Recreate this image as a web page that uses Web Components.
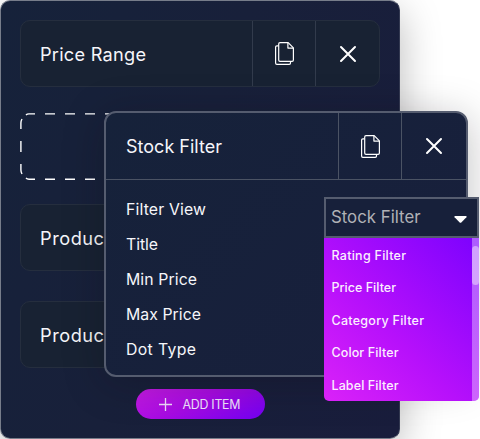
<!DOCTYPE html>
<html lang="en">
<head>
<meta charset="utf-8">
<title>Filter builder</title>
<style>
    html, body {
        margin: 0;
        width: 480px;
        height: 439px;
        overflow: hidden;
        background: #fff;
    }

    body {
        font-family: Inter, "Liberation Sans", sans-serif;
        color: #f6f6fa;
    }
</style>
</head>
<body>
<filter-builder>
    <filter-card><fit-text width="106">Price Range</fit-text></filter-card>
    <drop-zone></drop-zone>
    <filter-card><fit-text width="70.5">Product</fit-text></filter-card>
    <filter-card class="last"><fit-text width="70.5">Product</fit-text></filter-card>
    <add-button slot="footer"><fit-text width="58">ADD ITEM</fit-text></add-button>

    <filter-dialog slot="dialog">
        <fit-text slot="title" width="96">Stock Filter</fit-text>
        <fit-text width="80">Filter View</fit-text>
        <fit-text width="32">Title</fit-text>
        <fit-text width="71">Min Price</fit-text>
        <fit-text width="75">Max Price</fit-text>
        <fit-text width="70">Dot Type</fit-text>
    </filter-dialog>

    <filter-select slot="menu">
        <fit-text slot="value" width="89.5">Stock Filter</fit-text>
        <fit-text width="74.5">Rating Filter</fit-text>
        <fit-text width="64.5">Price Filter</fit-text>
        <fit-text width="92.5">Category Filter</fit-text>
        <fit-text width="67">Color Filter</fit-text>
        <fit-text width="67">Label Filter</fit-text>
    </filter-select>
</filter-builder>

<script>
function createTemplate(html) {
    const template = document.createElement('template');
    template.innerHTML = html;
    return template;
}

class BaseElement extends HTMLElement {
    constructor() {
        super();
        this._shadowRoot = this.attachShadow({ mode: 'open' });
        this._shadowRoot.appendChild(this.constructor.template.content.cloneNode(true));
    }
}

// Label that tracks its letters out to the given width
class FitText extends BaseElement {
    static template = createTemplate(`
        <style>
            :host { display: inline-block; white-space: nowrap; }
        </style>
        <slot></slot>
    `);

    connectedCallback() {
        const target = parseFloat(this.getAttribute('width'));
        const gaps = this.textContent.length - 1;
        const width = this.getBoundingClientRect().width;
        this.style.letterSpacing = (target - width) / gaps + 'px';
    }
}

class CopyIcon extends BaseElement {
    static template = createTemplate(`
        <style>
            :host { display: block; width: 19px; height: 23px; }
            svg { display: block; }
        </style>
        <svg width="19" height="23" viewBox="0 0 19 23" fill="none" stroke="#fff" stroke-width="1.2" stroke-linejoin="round">
            <path d="M3.5 3.8H1.9Q.6 3.8.6 5.1V21.1Q.6 22.4 1.9 22.4H14.2Q15.5 22.4 15.5 21.1V19.6"/>
            <path d="M5 .6H13.2L18.4 5.9V18.1Q18.4 19.4 17.1 19.4H5Q3.7 19.4 3.7 18.1V1.9Q3.7.6 5 .6Z"/>
            <path d="M12.9.8V6.1H18.2"/>
        </svg>
    `);
}

class CloseIcon extends BaseElement {
    static template = createTemplate(`
        <style>
            :host { display: block; width: 18px; height: 18px; }
            svg { display: block; }
        </style>
        <svg width="18" height="18" viewBox="0 0 18 18" fill="none" stroke="#fff" stroke-width="2" stroke-linecap="round">
            <path d="M2 2L16 16M16 2L2 16"/>
        </svg>
    `);
}

class FilterCard extends BaseElement {
    static template = createTemplate(`
        <style>
            :host {
                display: grid;
                grid-template-columns: 1fr 63px 64px;
                box-sizing: border-box;
                height: 67px;
                border: 1px solid #252e3e;
                border-radius: 10px;
                background: #182233;
                font-size: 18.2px;
                overflow: hidden;
            }
            :host(.last) { margin-top: 6px; }
            div { display: flex; align-items: center; }
            .title { padding-left: 19px; }
            .action { justify-content: center; border-left: 1px solid #323b4c; }
        </style>
        <div class="title"><slot></slot></div>
        <div class="action"><copy-icon></copy-icon></div>
        <div class="action"><close-icon></close-icon></div>
    `);
}

class DropZone extends BaseElement {
    static template = createTemplate(`
        <style>
            :host { display: block; height: 67px; margin: 2px 0 0; }
            svg { display: block; }
        </style>
        <svg width="360" height="67" fill="none" stroke="#fff" stroke-width="1.4">
            <path d="M6 2Q7 .9 9 .9H15M25 .9H350M6 65Q7 66.2 9 66.2H15M25 66.2H350" stroke-dasharray="10 10"/>
            <path d="M2 6Q.9 8 .9 10V16M.9 28V39M.9 51V57Q.9 59 2 61"/>
        </svg>
    `);
}

class AddButton extends BaseElement {
    static template = createTemplate(`
        <style>
            :host {
                display: flex;
                align-items: center;
                gap: 11px;
                box-sizing: border-box;
                width: 129px;
                height: 30px;
                padding-left: 23px;
                border-radius: 15px;
                background: linear-gradient(155deg, #c71be5 0%, #a80be3 45%, #7200f2 100%);
                color: #f0e2fd;
                font-size: 12.4px;
                font-weight: 400;
            }
        </style>
        <svg width="13" height="13" stroke="#efdcfa" stroke-width="1.3"><path d="M6.5 0V13M0 6.5H13"/></svg>
        <slot></slot>
    `);
}

class FilterDialog extends BaseElement {
    static template = createTemplate(`
        <style>
            :host {
                display: block;
                box-sizing: border-box;
                width: 364px;
                height: 266px;
                border: 2px solid #555c6f;
                border-radius: 12px;
                background: linear-gradient(135deg, #16223a, #181f3c);
                box-shadow: 0 6px 40px rgba(15, 12, 20, .26);
            }
            header {
                display: grid;
                grid-template-columns: 1fr 63px 65px;
                height: 66px;
                border-bottom: 1px solid #4b5364;
                font-size: 18px;
            }
            header div { display: flex; align-items: center; }
            .title { padding-left: 20px; }
            .action { box-sizing: border-box; justify-content: center; border-left: 1px solid #4b5364; }
            section {
                display: grid;
                grid-auto-rows: 35px;
                align-items: center;
                justify-items: start;
                padding: 12px 20px 0;
                font-size: 15.8px;
            }
        </style>
        <header>
            <div class="title"><slot name="title"></slot></div>
            <div class="action"><copy-icon></copy-icon></div>
            <div class="action"><close-icon></close-icon></div>
        </header>
        <section><slot></slot></section>
    `);
}

class FilterSelect extends BaseElement {
    static template = createTemplate(`
        <style>
            :host { display: block; width: 156px; }
            .value {
                display: flex;
                align-items: center;
                justify-content: space-between;
                box-sizing: border-box;
                width: 155px;
                height: 41px;
                padding: 0 10px 2px 5px;
                border: 2px solid #555c6f;
                background: #17203a;
                color: #b0b1b6;
                font-size: 16.8px;
                font-weight: 400;
            }
            .value svg { margin-top: 5px; }
            .menu {
                display: flex;
                justify-content: space-between;
                width: 155px;
                height: 163px;
                border-radius: 0 0 5px 5px;
                background: linear-gradient(45deg, #da22f8 0%, #b710fb 42%, #7c02fe 100%);
                overflow: hidden;
            }
            .items {
                display: grid;
                grid-auto-rows: 32.5px;
                align-items: center;
                justify-items: start;
                padding: 1px 0 0 7.5px;
                color: #fbeeff;
                font-size: 12.5px;
                font-weight: 500;
            }
            .track { width: 7px; padding-top: 8px; background: rgba(255, 255, 255, .36); }
            .thumb { height: 39px; border-radius: 4px; background: rgba(255, 255, 255, .42); }
        </style>
        <div class="value">
            <slot name="value"></slot>
            <svg width="13" height="7" fill="#fff"><path d="M1 0H12Q13 .3 12.4 1.2L7.3 6.4Q6.5 7.2 5.7 6.4L.6 1.2Q0 .3 1 0Z"/></svg>
        </div>
        <div class="menu">
            <div class="items"><slot></slot></div>
            <div class="track"><div class="thumb"></div></div>
        </div>
    `);
}

class FilterBuilder extends BaseElement {
    static template = createTemplate(`
        <style>
            :host { display: block; position: relative; width: 480px; height: 439px; overflow: hidden; }
            .panel {
                display: flex;
                flex-direction: column;
                gap: 24px;
                box-sizing: border-box;
                width: 400px;
                height: 439px;
                padding: 19px 19px 0;
                border: 1px solid #777d8a;
                border-right-color: #333951;
                border-radius: 10px;
                background: linear-gradient(110deg, #16223a 0%, #18203a 45%, #191d3c 100%);
                box-shadow: 0 12px 40px rgba(0, 0, 0, .28);
            }
            .footer { display: flex; justify-content: center; margin-top: -3px; }
            .dialog { position: absolute; left: 104px; top: 111px; }
            .menu { position: absolute; left: 324px; top: 197px; }
        </style>
        <div class="panel">
            <slot></slot>
            <div class="footer"><slot name="footer"></slot></div>
        </div>
        <div class="dialog"><slot name="dialog"></slot></div>
        <div class="menu"><slot name="menu"></slot></div>
    `);
}

window.customElements.define('copy-icon', CopyIcon);
window.customElements.define('close-icon', CloseIcon);
window.customElements.define('filter-card', FilterCard);
window.customElements.define('drop-zone', DropZone);
window.customElements.define('add-button', AddButton);
window.customElements.define('filter-dialog', FilterDialog);
window.customElements.define('filter-select', FilterSelect);
window.customElements.define('filter-builder', FilterBuilder);
window.customElements.define('fit-text', FitText);
</script>
</body>
</html>
